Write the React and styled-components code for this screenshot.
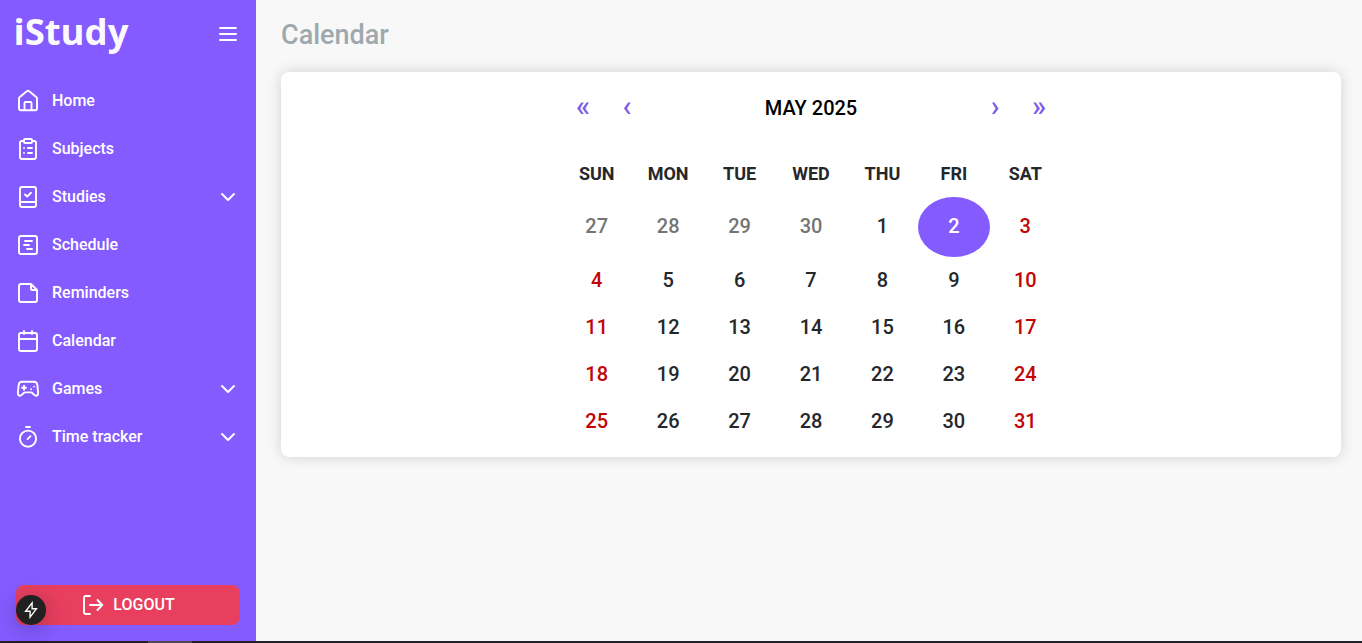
import React from "react";
import styled, { createGlobalStyle } from "styled-components";

const GlobalStyle = createGlobalStyle`
  *, *::before, *::after { box-sizing: border-box; }
  body {
    margin: 0;
    background: #f8f8f8;
    font-family: Roboto, "Liberation Sans", sans-serif;
    overflow: hidden;
  }
  button { font: inherit; border: 0; background: none; padding: 0; cursor: pointer; }
`;

const Shell = styled.div`
  height: 100vh;
  display: flex;
  flex-direction: column;
`;

const Columns = styled.div`
  flex: 1;
  min-height: 0;
  display: flex;
`;

const Sidebar = styled.aside`
  width: 256px;
  flex: none;
  display: flex;
  flex-direction: column;
  background: #845bff;
  color: #fff;
  padding: 10px 16px 16px;
  position: relative;
`;

const Brand = styled.header`
  height: 48px;
  display: flex;
  align-items: center;
  justify-content: space-between;
`;

const Logo = styled.svg`
  display: block;
  width: 116px;
  height: 48px;
  overflow: visible;

  text {
    font: 700 36px "Open Sans", sans-serif;
    fill: #fdfaff;
  }
`;

const Svg = styled.svg`
  display: block;
  width: 24px;
  height: 24px;
  flex: none;
  fill: none;
  stroke: currentColor;
  stroke-width: 1.9;
  stroke-linecap: round;
  stroke-linejoin: round;
`;

const Nav = styled.nav`
  margin-top: 19px;
  display: flex;
  flex-direction: column;
  flex: 1;
`;

const NavItem = styled.a`
  height: 48px;
  display: flex;
  align-items: center;
  gap: 12px;
  font-size: 16px;
  font-weight: 500;
  color: #fff;
`;

const NavLabel = styled.span`
  flex: 1;
  line-height: 20px;
  padding-bottom: 1px;
`;

const Logout = styled.button`
  height: 40px;
  border-radius: 8px;
  background: #e83f5f;
  color: #fff;
  display: flex;
  align-items: center;
  justify-content: center;
  gap: 8px;
  font-size: 16px;
  font-weight: 500;

  span { padding-bottom: 2px; }
`;

const DevBadge = styled.div`
  position: absolute;
  left: 16px;
  bottom: 16px;
  width: 30px;
  height: 30px;
  border-radius: 50%;
  background: #212121;
  box-shadow: 0 4px 22px rgba(0, 0, 0, 0.28);
  display: grid;
  place-items: center;
`;

const BoltSvg = styled.svg`
  width: 16px;
  height: 18px;
  fill: none;
  stroke: #fff;
  stroke-width: 1.4;
  stroke-linejoin: miter;
`;

const Main = styled.main`
  flex: 1;
  padding: 15px 21px 0 25px;
`;

const Title = styled.h1`
  margin: 0 0 17px;
  font-size: 27px;
  line-height: 40px;
  height: 40px;
  font-weight: 500;
  color: #9fa9ad;
`;

const Card = styled.section`
  height: 385px;
  padding-top: 13px;
  border-radius: 8px;
  background: #fff;
  box-shadow: 0 0 14px rgba(0, 0, 0, 0.16);
  display: flex;
  justify-content: center;
`;

const CalendarBox = styled.div`
  width: 500px;
  font-weight: 500;
  font-size: 20px;
  color: #25272b;
`;

const MonthBar = styled.div`
  height: 44px;
  display: flex;
  align-items: center;
  margin-bottom: 21px;
`;

const Step = styled.button`
  width: 44px;
  height: 44px;
  color: #7d5be8;
  font-size: 29px;
  line-height: 40px;
  padding-bottom: 2px;
`;

const Month = styled.span`
  flex: 1;
  text-align: center;
  color: #000;
  text-transform: uppercase;
  padding-top: 1px;
`;

const Week = styled.div`
  display: grid;
  grid-template-columns: repeat(7, 1fr);
  height: ${(p) => p.$height || 47}px;
`;

const Weekday = styled.div`
  display: grid;
  place-items: center;
  font-size: 18px;
  font-weight: 700;
  text-transform: uppercase;
`;

const tones = { outside: "#757575", weekend: "#c10505", selected: "#fff" };

const Day = styled.button`
  color: ${(p) => tones[p.$tone] || "#25272b"};
  background: ${(p) => (p.$tone === "selected" ? "#845bff" : "transparent")};
  border-radius: ${(p) => (p.$tone === "selected" ? "50%" : "0")};
  padding-bottom: ${(p) => (p.$tall ? 2 : 1)}px;
`;

const Strip = styled.footer`
  height: 2px;
  flex: none;
  background: linear-gradient(90deg, #202026 0 148px, #4d4a58 148px 192px, #202026 192px);
`;

const icons = {
  menu: "M4 6H20M4 12H20M4 18H20",
  chevron: "M6 9L12 15L18 9",
  home: "M3 9.5C3 8.8 3.3 8.3 3.8 7.9L10.8 2.3C11.5 1.7 12.5 1.7 13.2 2.3L20.2 7.9C20.7 8.3 21 8.8 21 9.5V19.5C21 20.6 20.4 21.2 19.3 21.2H4.7C3.6 21.2 3 20.6 3 19.5ZM8.5 21V14C8.5 13.3 8.9 13 9.5 13H14.5C15.1 13 15.5 13.3 15.5 14V21",
  subjects: "M8 4H6C4.7 4 4 4.7 4 6V20C4 21.3 4.7 22 6 22H18C19.3 22 20 21.3 20 20V6C20 4.7 19.3 4 18 4H16M9 2H15C15.6 2 16 2.4 16 3V5C16 5.6 15.6 6 15 6H9C8.4 6 8 5.6 8 5V3C8 2.4 8.4 2 9 2ZM8 11H8.01M12 11H16M8 16H8.01M12 16H16",
  studies: "M6 2H18C19.3 2 20 2.7 20 4V20C20 21.3 19.3 22 18 22H6C4.7 22 4 21.3 4 20V4C4 2.7 4.7 2 6 2ZM4 17H20M9 9.5L11.2 11.5L15 7.8",
  schedule: "M5 3H19C20.3 3 21 3.7 21 5V19C21 20.3 20.3 21 19 21H5C3.7 21 3 20.3 3 19V5C3 3.7 3.7 3 5 3ZM9 8H16M8 12H13M11 16H16",
  reminders: "M15 3H5C3.7 3 3 3.7 3 5V19C3 20.3 3.7 21 5 21H19C20.3 21 21 20.3 21 19V9ZM15 3V8C15 8.6 15.4 9 16 9H21",
  calendar: "M5 4H19C20.3 4 21 4.7 21 6V20C21 21.3 20.3 22 19 22H5C3.7 22 3 21.3 3 20V6C3 4.7 3.7 4 5 4ZM3 10H21M8 2V5M16 2V5",
  games: "M6 4.8H18C20 4.8 21 5.8 21.3 7.6L22.1 15.7C22.3 17.5 21.5 18.7 20 18.7C18.8 18.7 18.1 18 17.4 17.2L16.5 16.2C16 15.6 15.5 15.4 14.8 15.4H9.2C8.5 15.4 8 15.6 7.5 16.2L6.6 17.2C5.9 18 5.2 18.7 4 18.7C2.5 18.7 1.7 17.5 1.9 15.7L2.7 7.6C3 5.8 4 4.8 6 4.8ZM8 8.8V12.8M6 10.8H10M15 12.2H15.01M18 9.6H18.01",
  timer: "M12 5.6A8.1 8.1 0 1 1 12 21.8A8.1 8.1 0 1 1 12 5.6ZM10 2H14M11.6 14.1L14.5 11.2",
  logout: "M9 3H5C3.7 3 3 3.7 3 5V19C3 20.3 3.7 21 5 21H9M9 12H21M16.5 7L21.3 12L16.5 17",
};

const Icon = ({ name }) => (
  <Svg viewBox="0 0 24 24" aria-hidden="true">
    <path d={icons[name]} />
  </Svg>
);

const navItems = [
  ["Home", "home"],
  ["Subjects", "subjects"],
  ["Studies", "studies", true],
  ["Schedule", "schedule"],
  ["Reminders", "reminders"],
  ["Calendar", "calendar"],
  ["Games", "games", true],
  ["Time tracker", "timer", true],
];

const weekdays = ["Sun", "Mon", "Tue", "Wed", "Thu", "Fri", "Sat"];
const weeks = [
  [27, 28, 29, 30, 1, 2, 3],
  [4, 5, 6, 7, 8, 9, 10],
  [11, 12, 13, 14, 15, 16, 17],
  [18, 19, 20, 21, 22, 23, 24],
  [25, 26, 27, 28, 29, 30, 31],
];

function toneOf(week, column, day) {
  if (week === 0 && day > 7) return "outside";
  if (week === 0 && day === 2) return "selected";
  return column === 0 || column === 6 ? "weekend" : undefined;
}

export default function App() {
  return (
    <Shell>
      <GlobalStyle />
      <Columns>
        <Sidebar>
          <Brand>
            <Logo viewBox="0 0 116 48">
              <text x="-2.5" y="34.6" textLength="115" lengthAdjust="spacingAndGlyphs">iStudy</text>
            </Logo>
            <Icon name="menu" />
          </Brand>
          <Nav>
            {navItems.map(([label, icon, expandable]) => (
              <NavItem key={label}>
                <Icon name={icon} />
                <NavLabel>{label}</NavLabel>
                {expandable && <Icon name="chevron" />}
              </NavItem>
            ))}
          </Nav>
          <Logout>
            <Icon name="logout" />
            <span>LOGOUT</span>
          </Logout>
          <DevBadge>
            <BoltSvg viewBox="0 0 16 18">
              <path d="M9.1 1.9L2.6 10.2H7.1V16.1L13.4 7.8H9.1Z" />
            </BoltSvg>
          </DevBadge>
        </Sidebar>
        <Main>
          <Title>Calendar</Title>
          <Card>
            <CalendarBox>
              <MonthBar>
                <Step>«</Step>
                <Step>‹</Step>
                <Month>May 2025</Month>
                <Step>›</Step>
                <Step>»</Step>
              </MonthBar>
              <Week>
                {weekdays.map((d) => (
                  <Weekday key={d}>{d}</Weekday>
                ))}
              </Week>
              {weeks.map((days, w) => (
                <Week key={w} $height={w === 0 ? 60 : 47}>
                  {days.map((day, c) => (
                    <Day key={c} $tall={w === 0} $tone={toneOf(w, c, day)}>{day}</Day>
                  ))}
                </Week>
              ))}
            </CalendarBox>
          </Card>
        </Main>
      </Columns>
      <Strip />
    </Shell>
  );
}
